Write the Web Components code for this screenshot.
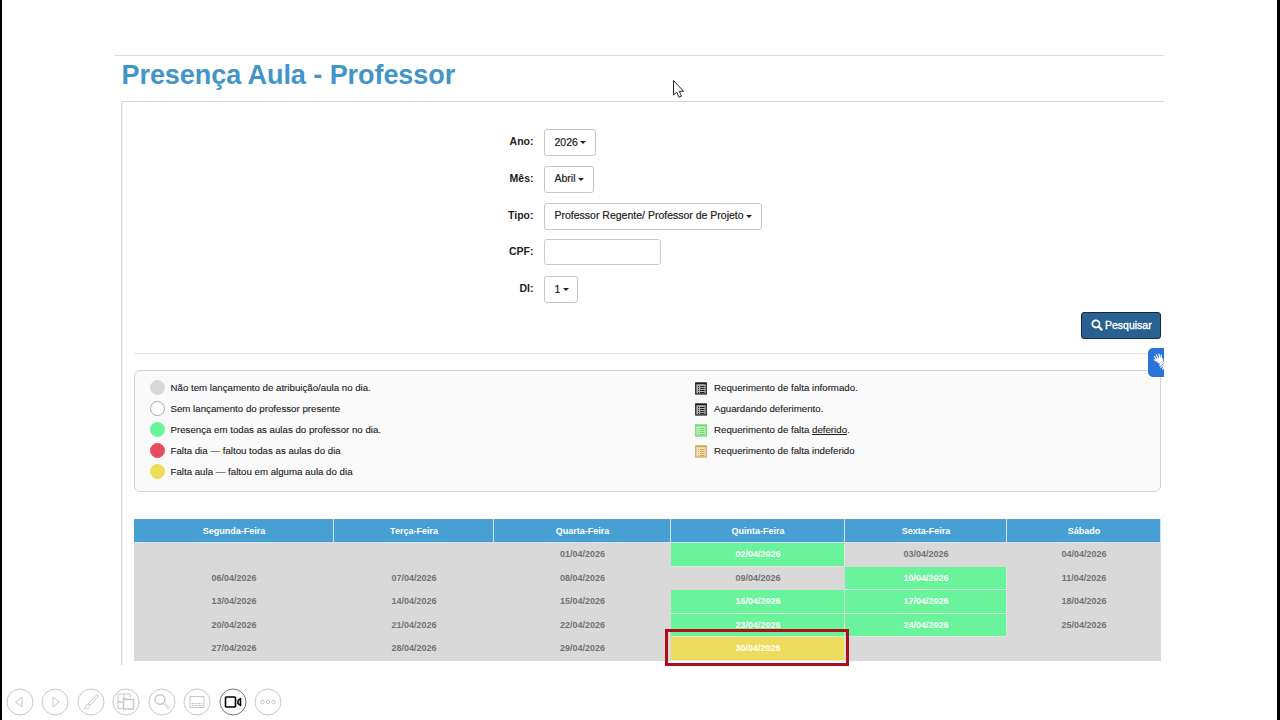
<!DOCTYPE html>
<html lang="pt-BR">
<head>
<meta charset="utf-8">
<title>Presença Aula - Professor</title>
<style>
    body {
    margin: 0;
    background: #fff;
    font-family: "Liberation Sans", Arial, sans-serif;
    color: #222;
    }
</style>
</head>
<body>
<slide-frame>
    <app-page title-text="Presença Aula - Professor">
        <form-row label="Ano:"><select-button>2026</select-button></form-row>
        <form-row label="Mês:"><select-button>Abril</select-button></form-row>
        <form-row label="Tipo:"><select-button>Professor Regente/ Professor de Projeto</select-button></form-row>
        <form-row label="CPF:"><text-field></text-field></form-row>
        <form-row label="DI:"><select-button>1</select-button></form-row>
        <search-button slot="actions">Pesquisar</search-button>
        <legend-box slot="legend">
            <legend-item color="#d8d8d8">Não tem lançamento de atribuição/aula no dia.</legend-item>
            <legend-item color="#ffffff" ring="#a9a9a9">Sem lançamento do professor presente</legend-item>
            <legend-item color="#69f39a">Presença em todas as aulas do professor no dia.</legend-item>
            <legend-item color="#e64b60">Falta dia — faltou todas as aulas do dia</legend-item>
            <legend-item color="#efdc5a">Falta aula — faltou em alguma aula do dia</legend-item>
            <legend-item slot="right" icon="#1c1c20" paper="#b4b4b8">Requerimento de falta informado.</legend-item>
            <legend-item slot="right" icon="#1c1c20" paper="#b4b4b8">Aguardando deferimento.</legend-item>
            <legend-item slot="right" icon="#6fd873" paper="#b5f3b2">Requerimento de falta <u>deferido</u>.</legend-item>
            <legend-item slot="right" icon="#cfa55c" paper="#f6e3b8">Requerimento de falta indeferido</legend-item>
        </legend-box>
        <month-table slot="table"></month-table>
    </app-page>
    <slide-controls slot="footer"></slide-controls>
    <mouse-cursor slot="over"></mouse-cursor>
</slide-frame>

<script>
function attach(el, html) {
    const template = document.createElement('template');
    template.innerHTML = html;
    el.attachShadow({mode: 'open'});
    el.shadowRoot.appendChild(template.content.cloneNode(true));
}

class SlideFrame extends HTMLElement {
    constructor() {
        super();
        attach(this, `
<style>
    :host {
    display: flex;
    flex-direction: column;
    position: relative;
    box-sizing: border-box;
    width: 1280px;
    height: 720px;
    overflow: hidden;
    background: #fff;
    border-left: 2px solid #000;
    border-right: 3px solid #000;
    }
    .content { padding: 55px 113px 0; height: 610px; }
    .footer { padding: 23px 0 0 3.5px; }
</style>
<div class="content"><slot></slot></div>
<div class="footer"><slot name="footer"></slot></div>
<slot name="over"></slot>
`);
    }
}
window.customElements.define('slide-frame', SlideFrame);

class AppPage extends HTMLElement {
    constructor() {
        super();
        attach(this, `
<style>
    :host {
    display: flex;
    flex-direction: column;
    position: relative;
    box-sizing: border-box;
    height: 610px;
    border-top: 1px solid #dcdcdc;
    }
    h1 {
    margin: 0 0 0 6.5px;
    height: 45px;
    line-height: 38px;
    font-size: 27px;
    letter-spacing: -.06px;
    white-space: nowrap;
    color: #4394c7;
    }
    .panel {
    flex: 1;
    margin-left: 6px;
    padding: 27px 3px 0 12px;
    border-top: 1px solid #d4d4d4;
    border-left: 1px solid #dadada;
    border-top-left-radius: 3px;
    box-shadow: inset 1px 0 #f0f0f0;
    }
    .fields {
    display: grid;
    grid-auto-rows: 36.75px;
    height: 183px;
    }
    .actions { display: flex; justify-content: flex-end; }
    hr { margin: 14px 0 16px; border: 0; border-top: 1px solid #e4e4e4; }
    .table { display: block; margin-top: 27px; }
    .vlibras {
    position: absolute;
    right: 0;
    top: 292px;
    width: 16px;
    height: 29px;
    background: #2a73d9;
    border-radius: 5px 0 0 5px;
    overflow: hidden;
    }
</style>
<h1></h1>
<div class="panel">
    <div class="fields"><slot></slot></div>
    <div class="actions"><slot name="actions"></slot></div>
    <hr>
    <slot name="legend"></slot>
    <div class="table"><slot name="table"></slot></div>
</div>
<div class="vlibras">
    <svg viewBox="0 0 16 29" width="16" height="29" fill="none" stroke="#fff" stroke-linecap="round" stroke-linejoin="round">
        <path d="M8.5 11.5l-2-3M10 10.5l-1.7-3.7M11.7 10l-.8-4M13.2 10.5l.1-3.5M8.5 13l-2.3-1.2" stroke-width="1.2"></path>
        <path d="M8 11.2l5.5-1.8 1.5 2.5-1.5 3.500-3-.5z" fill="#fff" stroke-width=".8"></path>
        <path d="M16 14l-4 3.200M16 16.500l-3 2.500M16 18.500l-1.300 2.500" stroke-width="1.5"></path>
    </svg>
</div>
`);
    }
    connectedCallback() {
        this.shadowRoot.querySelector('h1').textContent = this.getAttribute('title-text');
    }
}
window.customElements.define('app-page', AppPage);

class FormRow extends HTMLElement {
    constructor() {
        super();
        attach(this, `
<style>
    :host {
    display: grid;
    grid-template-columns: 399.5px auto;
    column-gap: 10.5px;
    justify-content: start;
    align-items: start;
    }
    label {
    font-size: 10.5px;
    font-weight: bold;
    line-height: 25px;
    text-align: right;
    }
</style>
<label></label>
<slot></slot>
`);
    }
    connectedCallback() {
        this.shadowRoot.querySelector('label').textContent = this.getAttribute('label');
    }
}
window.customElements.define('form-row', FormRow);

class SelectButton extends HTMLElement {
    constructor() {
        super();
        attach(this, `
<style>
    :host {
    display: flex;
    align-items: center;
    justify-self: start;
    box-sizing: border-box;
    height: 27px;
    padding: 0 8.5px 2px 9.5px;
    border: 1px solid #c6c6c6;
    border-radius: 3px;
    font-size: 10.5px;
    white-space: nowrap;
    -webkit-text-stroke: .2px #222;
    }
    i {
    margin: 2px 0 0 2.5px;
    border: 3px solid transparent;
    border-top-color: #222;
    border-bottom: 0;
    }
</style>
<slot></slot><i></i>
`);
    }
}
window.customElements.define('select-button', SelectButton);

class TextField extends HTMLElement {
    constructor() {
        super();
        attach(this, `
<style>
    :host {
    display: block;
    box-sizing: border-box;
    width: 117px;
    height: 26px;
    border: 1px solid #c9c9c9;
    border-radius: 3px;
    }
</style>
`);
    }
}
window.customElements.define('text-field', TextField);

class SearchButton extends HTMLElement {
    constructor() {
        super();
        attach(this, `
<style>
    :host {
    display: flex;
    align-items: center;
    box-sizing: border-box;
    width: 80px;
    height: 27px;
    padding: 0 0 1px 9px;
    gap: 2px;
    background: #286090;
    border: 1px solid #122b40;
    border-radius: 3px;
    color: #fff;
    font-size: 10.5px;
    -webkit-text-stroke: .35px #fff;
    }
</style>
<svg viewBox="0 0 12 12" width="12" height="12" fill="none" stroke="#fff" stroke-linecap="round">
    <circle cx="4.9" cy="4.9" r="3.6" stroke-width="1.8"></circle>
    <path d="M7.8 7.8l2.8 2.8" stroke-width="2.2"></path>
</svg>
<slot></slot>
`);
    }
}
window.customElements.define('search-button', SearchButton);

class LegendBox extends HTMLElement {
    constructor() {
        super();
        attach(this, `
<style>
    :host {
    display: grid;
    grid-template-columns: 545px 1fr;
    box-sizing: border-box;
    height: 122px;
    padding: 6px 15px 0;
    background: #fafafa;
    border: 1px solid #d4d4d4;
    border-radius: 6px;
    }
</style>
<div><slot></slot></div>
<div><slot name="right"></slot></div>
`);
    }
}
window.customElements.define('legend-box', LegendBox);

class LegendItem extends HTMLElement {
    constructor() {
        super();
        attach(this, `
<style>
    :host {
    display: flex;
    align-items: center;
    height: 21px;
    font-size: 9.7px;
    white-space: nowrap;
    -webkit-text-stroke: .12px #222;
    }
    .mark { flex: none; }
    .dot {
    box-sizing: border-box;
    width: 15px;
    height: 15px;
    margin-right: 5.5px;
    border-radius: 50%;
    }
    svg {
    display: block;
    margin: 2px 7px 0 0;
    }
</style>
<div class="mark"></div><span><slot></slot></span>
`);
    }
    connectedCallback() {
        const mark = this.shadowRoot.querySelector('.mark');
        const icon = this.getAttribute('icon');
        if(icon) {
            mark.innerHTML = `
<svg viewBox="0 0 12 13" width="12" height="13">
    <rect x=".75" y="1" width="10.5" height="11" fill="${this.getAttribute('paper')}" stroke="${icon}" stroke-width="1.2"></rect>
    <path d="M.5 1.5h11" stroke="${icon}" stroke-width="1.5"></path>
    <path d="M3 4.5h1M3 6.5h1M3 8.5h1M3 10.5h1M5 4.5h4.5M5 6.5h4.5M5 8.5h4.5M5 10.5h4.5" stroke="${icon}"></path>
</svg>`;
        }
        else {
            mark.classList.add('dot');
            mark.style.background = this.getAttribute('color');
            mark.style.border = '1px solid ' + (this.getAttribute('ring') || this.getAttribute('color'));
        }
    }
}
window.customElements.define('legend-item', LegendItem);

const days = ['Segunda-Feira', 'Terça-Feira', 'Quarta-Feira', 'Quinta-Feira', 'Sexta-Feira', 'Sábado'];
const weeks = [
    ['', '', '01', '02', '03', '04'],
    ['06', '07', '08', '09', '10', '11'],
    ['13', '14', '15', '16', '17', '18'],
    ['20', '21', '22', '23', '24', '25'],
    ['27', '28', '29', '30', '', '']
];
const present = ['02', '10', '16', '17', '23', '24'];
const partial = ['30'];

class MonthTable extends HTMLElement {
    constructor() {
        super();
        attach(this, `
<style>
    :host {
    display: block;
    position: relative;
    }
    .grid {
    display: grid;
    grid-template-columns: 200px 160px 177px 174px 162px 154px;
    grid-template-rows: 24px repeat(5, 23.6px);
    background: #d9d9d9;
    font-size: 9px;
    font-weight: bold;
    text-align: center;
    line-height: 22px;
    color: #737373;
    }
    .head {
    background: #479fd3;
    color: #fff;
    line-height: 24px;
    box-shadow: inset -1px -1px #d3e3ed, inset 0 1px #5b9dc3;
    }
    .present, .partial {
    color: #fff;
    background: #69f39a;
    box-shadow: inset 0 -1px #d9ead9, inset -1px 0 #d9ead9;
    }
    .partial { background: #f0dc5c; }
    .mark {
    position: absolute;
    left: 531px;
    top: 110px;
    width: 178px;
    height: 31px;
    border: 3px solid #b00d18;
    }
</style>
<div class="grid"></div>
<div class="mark"></div>
`);
    }
    connectedCallback() {
        const grid = this.shadowRoot.querySelector('.grid');
        days.forEach(day => this.cell(grid, day, 'head'));
        weeks.flat().forEach(day => {
            const state = present.includes(day) ? 'present' : partial.includes(day) ? 'partial' : '';
            this.cell(grid, day && day + '/04/2026', state);
        });
    }
    cell(grid, text, state) {
        const div = document.createElement('div');
        div.textContent = text;
        div.className = state;
        grid.appendChild(div);
    }
}
window.customElements.define('month-table', MonthTable);

class SlideControls extends HTMLElement {
    constructor() {
        super();
        attach(this, `
<style>
    :host {
    display: flex;
    gap: 7.5px;
    }
    svg {
    width: 28px;
    height: 28px;
    fill: none;
    stroke: #c8c8c8;
    stroke-linejoin: round;
    }
    .on { stroke: #777; }
</style>
<svg viewBox="0 0 28 28"><circle cx="14" cy="14" r="13"></circle><path d="M16 9v10l-6.5-5z"></path></svg>
<svg viewBox="0 0 28 28"><circle cx="14" cy="14" r="13"></circle><path d="M12 9v10l6-5z"></path></svg>
<svg viewBox="0 0 28 28"><circle cx="14" cy="14" r="13"></circle><path d="M11 16l8.5-9c1-1 2.500 0 1.700 1.300L13 17.500zM11 16c-2 0-2.300 2-2.700 3.500l-1.600 1c2.800.7 5.600.2 6.300-3z"></path></svg>
<svg viewBox="0 0 28 28"><circle cx="14" cy="14" r="13"></circle><path d="M10 14H6V6h12v4M6 14v6.500h4.500M12 6v5M6 14h5M10.500 10.500h4"></path><rect x="11.5" y="11.5" width="10" height="9.5" stroke-width="1.5"></rect></svg>
<svg viewBox="0 0 28 28"><circle cx="14" cy="14" r="13"></circle><circle cx="12" cy="11.5" r="4.8" stroke-width="1.5"></circle><path d="M15.3 15.5l4.700 5.300 1.500-1.400-5-5z"></path></svg>
<svg viewBox="0 0 28 28"><circle cx="14" cy="14" r="13"></circle><path d="M7 8.5h14v11H7z"></path><path d="M8.5 15.5h11M8.5 17.5h11" stroke-dasharray="2.5 .8"></path></svg>
<svg viewBox="0 0 28 28" class="on"><circle cx="14" cy="14" r="13"></circle><g stroke="#000" stroke-width="1.6"><rect x="6.5" y="9" width="10" height="10" rx="1"></rect><path d="M19 12.5l2.5-2v7l-2.5-2z"></path></g></svg>
<svg viewBox="0 0 28 28"><circle cx="14" cy="14" r="13"></circle><circle cx="8.5" cy="14" r="1.7"></circle><circle cx="14" cy="14" r="1.7"></circle><circle cx="19.5" cy="14" r="1.7"></circle></svg>
`);
    }
}
window.customElements.define('slide-controls', SlideControls);

class MouseCursor extends HTMLElement {
    constructor() {
        super();
        attach(this, `
<style>
    :host {
    display: block;
    position: absolute;
    left: 670px;
    top: 79px;
    width: 13px;
    height: 20px;
    }
</style>
<svg viewBox="0 0 13 20" width="13" height="20">
    <path d="M1.5 1.5v14.500l3.200-2.800 2.300 5 2.500-1-2.200-4.900h4.300z" fill="#fff" stroke="#222"></path>
</svg>
`);
    }
}
window.customElements.define('mouse-cursor', MouseCursor);
</script>
</body>
</html>
